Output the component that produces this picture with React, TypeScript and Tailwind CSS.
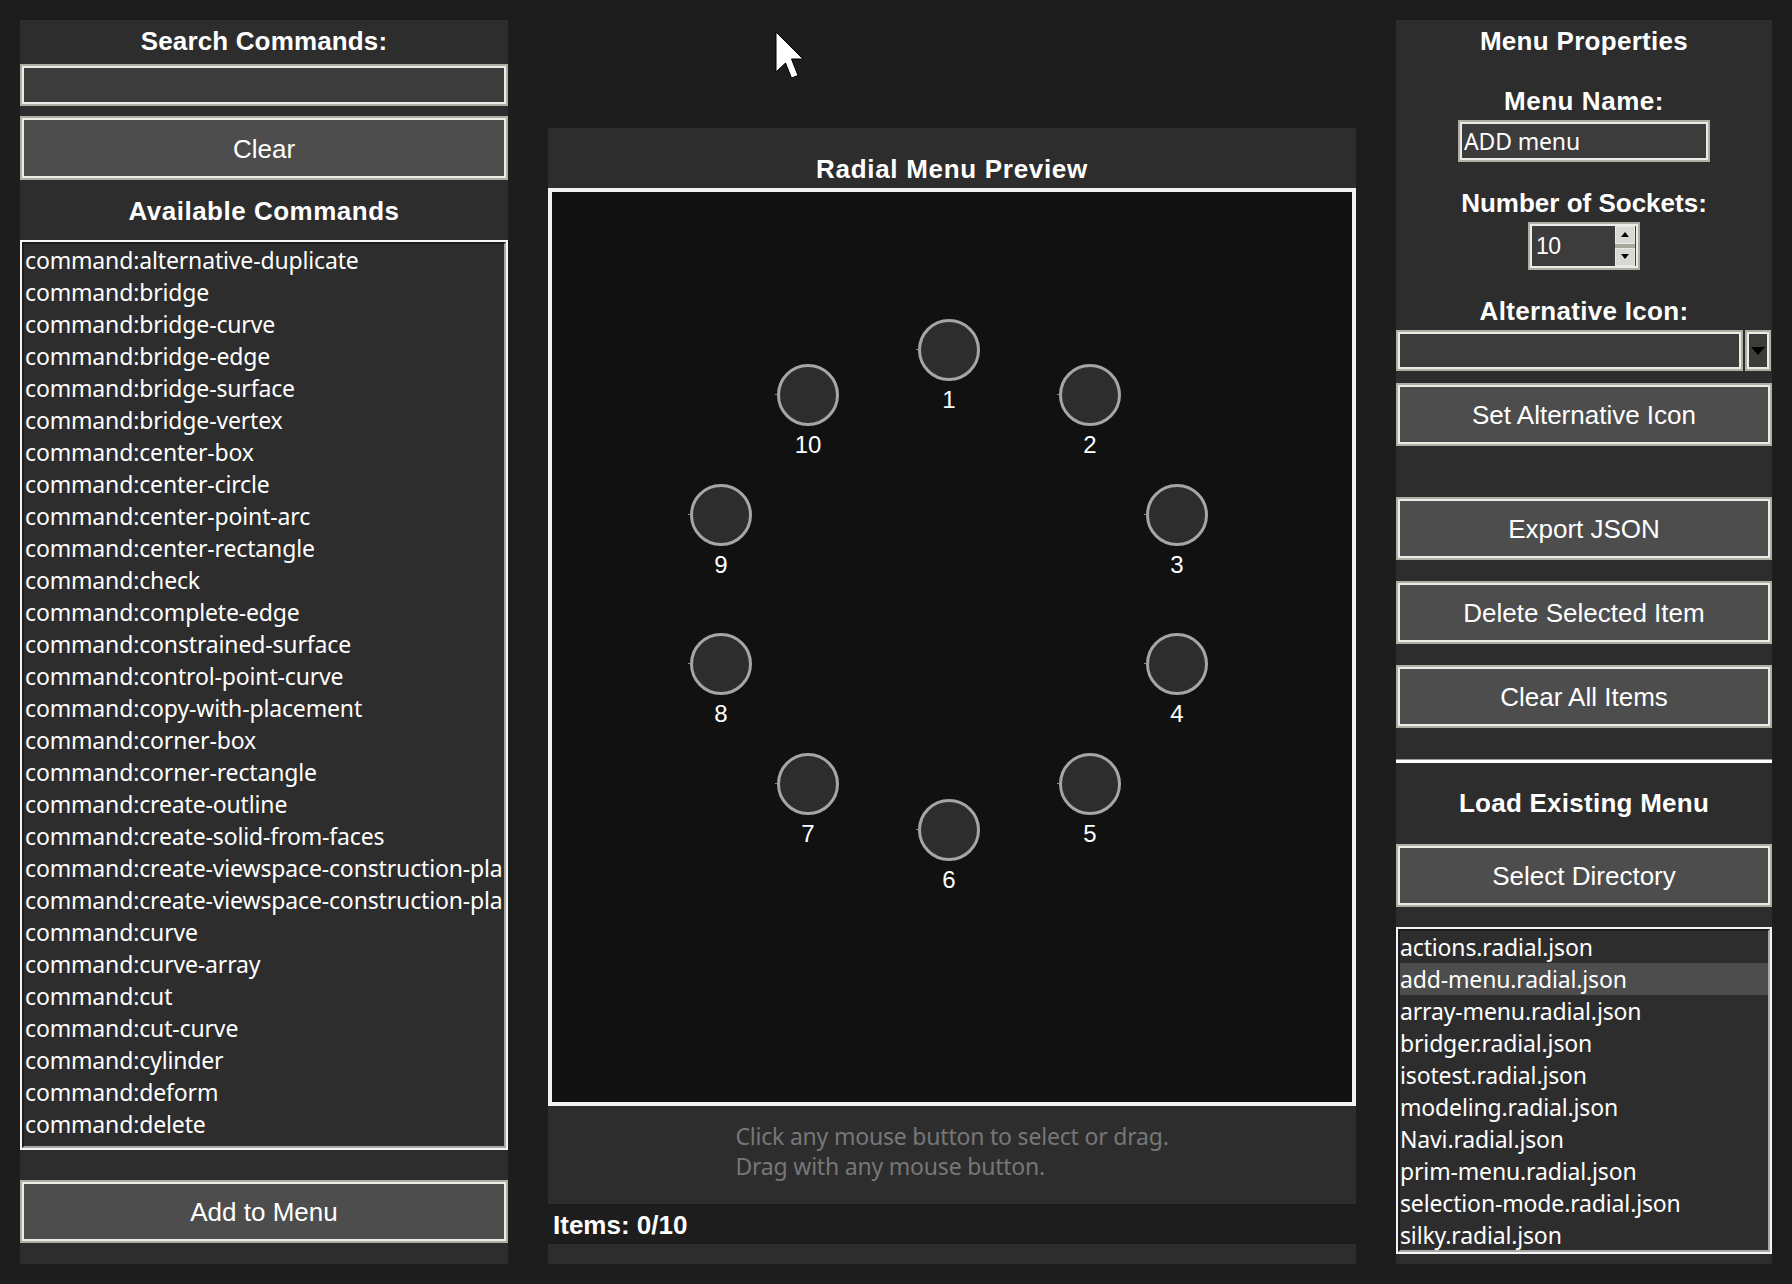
import React from 'react';

const commands = [
  'alternative-duplicate', 'bridge', 'bridge-curve', 'bridge-edge', 'bridge-surface', 'bridge-vertex',
  'center-box', 'center-circle', 'center-point-arc', 'center-rectangle', 'check', 'complete-edge',
  'constrained-surface', 'control-point-curve', 'copy-with-placement', 'corner-box', 'corner-rectangle',
  'create-outline', 'create-solid-from-faces', 'create-viewspace-construction-plane',
  'create-viewspace-construction-plane-alt', 'curve', 'curve-array', 'cut', 'cut-curve', 'cylinder',
  'deform', 'delete',
];

const menuFiles = [
  'actions', 'add-menu', 'array-menu', 'bridger', 'isotest', 'modeling', 'Navi', 'prim-menu',
  'selection-mode', 'silky',
];

const sockets = Array.from({ length: 10 }, (_, i) => {
  const angle = (i * 36 * Math.PI) / 180;
  return { label: i + 1, x: Math.round(397 + 240 * Math.sin(angle)), y: Math.round(397.5 - 240 * Math.cos(angle)) };
});

const SANS = "font-['Liberation_Sans',Arial,sans-serif]";
const LIST = "font-['Noto_Sans','Open_Sans',sans-serif]";

const Heading = ({ children, className = '' }: { children: React.ReactNode; className?: string }) => (
  <div className={`${SANS} text-center text-[26px] font-bold text-white flex items-center justify-center ${className}`}>
    {children}
  </div>
);

const Button = ({ children, className = '' }: { children: React.ReactNode; className?: string }) => (
  <div className={`border-2 border-[#aeaea4] ${className}`}>
    <div className={`${SANS} h-full pt-[2px] border-2 border-[#ecece6] bg-[#4d4d4d] text-[26px] text-white flex items-center justify-center`}>
      {children}
    </div>
  </div>
);

const Field = ({ children, className = '' }: { children?: React.ReactNode; className?: string }) => (
  <div className={`border-2 border-[#aeaea4] ${className}`}>
    <div className="h-full border-2 border-[#ecece6] bg-[#3c3c3c] flex items-center overflow-hidden">{children}</div>
  </div>
);

const ListBox = ({ children, className = '' }: { children: React.ReactNode; className?: string }) => (
  <div className={`border-2 border-[#f4f4f4] ${className}`}>
    <div className={`${LIST} h-full border-2 border-t-[#1c1c1c] border-l-[#1c1c1c] border-r-[#a8a8a8] border-b-[#a8a8a8] bg-[#2d2d2d] text-[23px] tracking-[-0.15px] leading-[32px] text-white overflow-hidden`}>
      {children}
    </div>
  </div>
);

const SpinButton = ({ up }: { up?: boolean }) => (
  <div className="w-[20px] h-[18px] bg-[#d8d8d4] border border-[#e8e8e4] flex items-center justify-center">
    <svg width="10" height="6" viewBox="0 0 10 6">
      <path d={up ? 'M5 0 L9 5 H1 Z' : 'M1 0 H9 L5 5 Z'} fill="#000" />
    </svg>
  </div>
);

export default function App() {
  return (
    <div className="relative w-full h-[1284px] bg-[#1d1d1d] flex px-5 py-5 gap-10 overflow-hidden">
      {/* left column */}
      <div className="w-[488px] h-full bg-[#2d2d2d] flex flex-col">
        <Heading className="h-[44px] tracking-[0.15px] pb-[1px]">Search Commands:</Heading>
        <Field className="h-[42px]" />
        <Button className="h-[64px] mt-[10px]">Clear</Button>
        <Heading className="h-[60px] pt-[2px] tracking-[0.5px]">Available Commands</Heading>
        <ListBox className="h-[910px]">
          {commands.map((c) => (
            <div key={c} className="pl-[1px] h-[32px] whitespace-nowrap">
              command:{c}
            </div>
          ))}
        </ListBox>
        <Button className="h-[63px] mt-[30px]">Add to Menu</Button>
      </div>

      {/* center column */}
      <div className="w-[808px] h-full pt-[108px] flex flex-col">
        <div className="bg-[#2d2d2d]">
          <Heading className="h-[60px] pt-[22px] tracking-[0.7px]">Radial Menu Preview</Heading>
          <div className="relative h-[918px] border-4 border-[#f2f2f2] bg-[#111111]">
            {sockets.map((s) => (
              <div
                key={s.label}
                className="absolute w-[100px] flex flex-col items-center"
                style={{ left: s.x - 50, top: s.y - 31 }}
              >
                <div className="relative w-[62px] h-[62px] rounded-full border-[3px] border-[#a6a6a6] bg-[#2d2d2d]">
                  <div className="absolute left-[-5px] top-[27px] w-[3px] h-[1px] bg-[#8a8a8a]" />
                </div>
                <div className={`${SANS} mt-[2px] text-[24px] leading-[34px] text-white`}>{s.label}</div>
              </div>
            ))}
          </div>
          <div className="h-[98px] flex justify-center pt-[15px]">
            <div className={`${LIST} text-[23px] tracking-[-0.2px] leading-[30px] text-[#777777] text-left`}>
              <div>Click any mouse button to select or drag.</div>
              <div>Drag with any mouse button.</div>
            </div>
          </div>
        </div>
        <div className={`${SANS} h-[40px] pl-[5px] pt-[2px] text-[26px] font-bold text-white flex items-center`}>Items: 0/10</div>
        <div className="h-[20px] bg-[#2d2d2d]" />
      </div>

      {/* right column */}
      <div className="w-[376px] h-full bg-[#2d2d2d] flex flex-col">
        <Heading className="h-[41px] pt-[2px] tracking-[0.3px]">Menu Properties</Heading>
        <Heading className="h-[40px] mt-[19px] pt-[2px] tracking-[0.55px]">Menu Name:</Heading>
        <Field className="h-[42px] w-[252px] self-center">
          <span className={`${LIST} pl-[2px] text-[23px] tracking-[-0.15px] text-white`}>ADD menu</span>
        </Field>
        <Heading className="h-[40px] mt-[20px] pt-[2px]">Number of Sockets:</Heading>
        <Field className="h-[48px] w-[112px] self-center">
          <span className={`${SANS} pl-[4px] text-[23px] tracking-[-0.5px] text-white flex-1`}>10</span>
          <div className="flex flex-col h-full justify-between bg-[#a8a89e] mr-[1px]">
            <SpinButton up />
            <SpinButton />
          </div>
        </Field>
        <Heading className="h-[40px] mt-[20px] pt-[2px] tracking-[0.3px]">Alternative Icon:</Heading>
        <div className="flex h-[41px] gap-[2px] mr-[1px]">
          <Field className="flex-1" />
          <Field className="w-[26px]">
            <svg width="14" height="8" viewBox="0 0 14 8" className="mx-auto">
              <path d="M0 0 H14 L7 8 Z" fill="#000" />
            </svg>
          </Field>
        </div>
        <Button className="h-[63px] mt-[12px]">Set Alternative Icon</Button>
        <Button className="h-[63px] mt-[51px]">Export JSON</Button>
        <Button className="h-[63px] mt-[21px]">Delete Selected Item</Button>
        <Button className="h-[63px] mt-[21px]">Clear All Items</Button>
        <div className="h-[4px] mt-[31px] border-t border-[#999999] bg-white" />
        <Heading className="h-[81px] tracking-[0.25px]">Load Existing Menu</Heading>
        <Button className="h-[63px]">Select Directory</Button>
        <ListBox className="h-[327px] mt-[20px]">
          {menuFiles.map((f) => (
            <div key={f} className={`h-[32px] whitespace-nowrap ${f === 'add-menu' ? 'bg-[#4d4d4d]' : ''}`}>
              {f}.radial.json
            </div>
          ))}
        </ListBox>
      </div>

      {/* mouse pointer from the capture */}
      <svg className="absolute left-[775px] top-[31px]" width="30" height="50" viewBox="0 0 30 50">
        <path d="M1 1 L1 41 L10.5 32 L16.5 47 L23 44.5 L16.5 28 L28 28 Z" fill="#fff" stroke="#000" strokeWidth="1" />
      </svg>
    </div>
  );
}
